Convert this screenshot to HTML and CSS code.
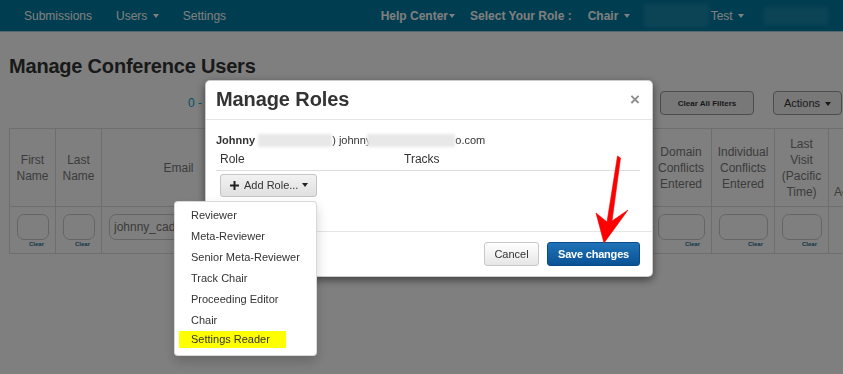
FILE: index.html
```html
<!DOCTYPE html>
<html lang="en">
<head>
<meta charset="utf-8">
<title>Manage Conference Users</title>
<link rel="stylesheet" href="styles.css">
</head>
<body>
<nav class="topnav">
  <ul class="nav-left">
    <li class="nav-item">Submissions</li>
    <li class="nav-item">Users <span class="caret"></span></li>
    <li class="nav-item">Settings</li>
  </ul>
  <ul class="nav-right">
    <li class="nav-item strong help">Help Center<span class="caret tight"></span></li>
    <li class="nav-item strong role-label">Select Your Role :</li>
    <li class="nav-item strong chair">Chair <span class="caret"></span></li>
    <li class="nav-blur blur-a"></li>
    <li class="nav-item test">Test <span class="caret"></span></li>
    <li class="nav-blur blur-b"></li>
  </ul>
</nav>

<main class="page">
  <h1 class="page-title">Manage Conference Users</h1>
  <div class="toolbar">
    <span class="pager">0 -</span>
    <button class="btn btn-filters">Clear All Filters</button>
    <button class="btn btn-actions">Actions <span class="caret"></span></button>
  </div>

  <table class="users">
    <colgroup>
      <col class="c-first"><col class="c-last"><col class="c-email">
      <col class="c-aff"><col class="c-roles"><col class="c-status">
      <col class="c-domain"><col class="c-indiv"><col class="c-visit"><col class="c-more">
    </colgroup>
    <thead>
      <tr>
        <th>First Name</th>
        <th>Last Name</th>
        <th>Email</th>
        <th>Organization</th>
        <th>Roles</th>
        <th>Status</th>
        <th>Domain Conflicts Entered</th>
        <th>Individual Conflicts Entered</th>
        <th>Last Visit (Pacific Time)</th>
        <th class="th-more">Actions</th>
      </tr>
    </thead>
    <tbody>
      <tr class="filters">
        <td><input class="filter-input" type="text"><span class="clear">Clear</span></td>
        <td><input class="filter-input" type="text"><span class="clear">Clear</span></td>
        <td><input class="filter-input" type="text" value="johnny_cadiz"><span class="clear">Clear</span></td>
        <td><input class="filter-input" type="text"><span class="clear">Clear</span></td>
        <td><input class="filter-input" type="text"><span class="clear">Clear</span></td>
        <td><input class="filter-input" type="text"><span class="clear">Clear</span></td>
        <td><input class="filter-input" type="text"><span class="clear">Clear</span></td>
        <td><input class="filter-input" type="text"><span class="clear">Clear</span></td>
        <td><input class="filter-input" type="text"><span class="clear">Clear</span></td>
        <td></td>
      </tr>
    </tbody>
  </table>
</main>

<div class="backdrop"></div>

<div class="modal">
  <div class="modal-header">
    <h2 class="modal-title">Manage Roles</h2>
    <button class="close">&times;</button>
  </div>
  <div class="modal-body">
    <div class="user-line"><b>Johnny</b> <span class="redact r1"></span>) johnny<span class="redact r2"></span>o.com</div>
    <table class="roles">
      <colgroup><col class="c-role"><col></colgroup>
      <thead>
        <tr><th>Role</th><th>Tracks</th></tr>
      </thead>
      <tbody>
        <tr>
          <td colspan="2" class="add-cell">
            <div class="add-wrap">
              <button class="btn btn-add">
                <svg class="plus" width="9" height="9" viewBox="0 0 9 9"><path d="M4.5 0v9M0 4.5h9" stroke="#222" stroke-width="2"/></svg>Add Role...<span class="caret dark"></span>
              </button>
              <ul class="role-menu">
                <li>Reviewer</li>
                <li>Meta-Reviewer</li>
                <li>Senior Meta-Reviewer</li>
                <li>Track Chair</li>
                <li>Proceeding Editor</li>
                <li>Chair</li>
                <li><span class="hl">Settings Reader</span></li>
              </ul>
            </div>
          </td>
        </tr>
      </tbody>
    </table>
  </div>
  <div class="modal-footer">
    <button class="btn btn-cancel">Cancel</button>
    <button class="btn btn-save">Save changes</button>
  </div>
</div>

<svg class="annotation" width="843" height="374" viewBox="0 0 843 374">
  <path d="M617.5 156 L620.5 158 L612 221 L628 210 L604 243 L596 213 L607 222 Z" fill="#f00" stroke="#e00" stroke-width="0.6" stroke-linejoin="round"/>
</svg>
</body>
</html>
```

FILE: styles.css
```css
* { box-sizing: border-box; }

html, body {
  margin: 0;
  height: 100%;
  overflow: hidden;
}

body {
  font-family: "Liberation Sans", Arial, Helvetica, sans-serif;
  background: #fff;
  color: #333;
}

ul { list-style: none; margin: 0; padding: 0; }

/* ---------- top navigation ---------- */
.topnav {
  display: flex;
  align-items: center;
  height: 32px;
  background: #007aa0;
  border-bottom: 1px solid #a6d2da;
  padding: 0 15px 0 12px;
}

.nav-left, .nav-right {
  display: flex;
  align-items: center;
}

.nav-right { margin-left: auto; }

.nav-item {
  color: #fff;
  font-size: 12px;
  line-height: 16px;
  white-space: nowrap;
}

.nav-left .nav-item { padding: 0 12px; }

.strong { font-weight: bold; }
.role-label { margin-left: 15px; }
.chair { margin-left: 16px; }
.blur-a { margin-left: 14px; width: 65px; height: 23px; }
.test { margin-left: 2px; }
.blur-b { margin-left: 20px; width: 64px; height: 18px; }

.nav-blur {
  background: rgba(110, 190, 210, 0.22);
  filter: blur(2px);
  border-radius: 2px;
}

.caret {
  display: inline-block;
  width: 0;
  height: 0;
  border-top: 4px solid;
  border-left: 3.5px solid transparent;
  border-right: 3.5px solid transparent;
  margin-left: 2px;
  vertical-align: middle;
}

.caret.tight { margin-left: 1px; }
.caret.dark { color: #222; margin-left: 4px; }

/* ---------- page ---------- */
.page { padding: 0 1px 0 9px; }

.page-title {
  margin: 22px 0 0;
  font-size: 20px;
  line-height: 24px;
  font-weight: bold;
  letter-spacing: -0.2px;
  color: #333;
}

.toolbar {
  display: flex;
  align-items: center;
  height: 24px;
  margin-top: 13px;
}

.pager {
  flex: 1;
  padding-left: 179px;
  font-size: 12px;
  color: #00a0c8;
}

.btn {
  font-family: inherit;
  cursor: pointer;
  color: #333;
}

.btn-filters {
  width: 94px;
  height: 24px;
  font-size: 8px;
  font-weight: bold;
  background: #f0f0f0;
  border: 1px solid #9a9a9a;
  border-radius: 4px;
  padding: 0;
}

.btn-actions {
  width: 69px;
  height: 24px;
  margin-left: 19px;
  font-size: 11px;
  background: #f0f0f0;
  border: 1px solid #9a9a9a;
  border-radius: 4px;
  padding: 0;
}

/* ---------- users table ---------- */
.users {
  margin-top: 13px;
  table-layout: fixed;
  width: 899px;
  border-collapse: collapse;
  border: 1px solid #dcdcdc;
}

.c-first, .c-last { width: 46px; }
.c-email { width: 154px; }
.c-aff { width: 140px; }
.c-roles { width: 130px; }
.c-status { width: 125px; }
.c-domain { width: 61px; }
.c-indiv { width: 63px; }
.c-visit { width: 54px; }
.c-more { width: 80px; }

.users th {
  height: 78px;
  padding: 0 4px;
  border: 1px solid #dcdcdc;
  font-size: 12px;
  line-height: 16px;
  font-weight: normal;
  color: #787878;
  text-align: center;
  vertical-align: middle;
}

.users th.th-more {
  text-align: left;
  vertical-align: bottom;
  white-space: nowrap;
  padding: 0 0 6px 5px;
}

.users td {
  height: 47px;
  padding: 7px 6px 0 7px;
  border: 1px solid #dcdcdc;
  vertical-align: top;
}

.filter-input {
  display: block;
  width: 100%;
  height: 26px;
  border: 1px solid #cacaca;
  border-radius: 7px;
  background: #fff;
  padding: 0 4px;
  font-family: inherit;
  font-size: 12px;
  color: #777;
}

.clear {
  display: block;
  text-align: right;
  padding-right: 5px;
  margin-top: 1px;
  font-size: 6px;
  line-height: 7px;
  font-weight: bold;
  color: #2a6a90;
}

/* ---------- modal ---------- */
.backdrop {
  position: fixed;
  inset: 0;
  background: rgba(0, 0, 0, 0.5);
  z-index: 10;
}

.modal {
  position: fixed;
  top: 80px;
  left: 205px;
  width: 448px;
  background: #fff;
  border: 1px solid rgba(0, 0, 0, 0.2);
  border-radius: 5px;
  box-shadow: 0 3px 9px rgba(0, 0, 0, 0.5);
  z-index: 20;
}

.modal-header {
  display: flex;
  justify-content: space-between;
  align-items: center;
  padding: 7px 12px 9px 10px;
  border-bottom: 1px solid #e5e5e5;
}

.modal-title {
  margin: 0;
  font-size: 20px;
  line-height: 22px;
  font-weight: bold;
  letter-spacing: -0.1px;
  color: #333;
}

.close {
  background: none;
  border: 0;
  padding: 0;
  font-family: inherit;
  font-size: 17px;
  font-weight: bold;
  line-height: 1;
  color: #8c8c8c;
}

.modal-body {
  padding: 12px 12px 34px 10px;
}

.user-line {
  font-size: 11px;
  line-height: 16px;
  color: #333;
  white-space: nowrap;
}

.redact {
  display: inline-block;
  height: 13px;
  vertical-align: -3px;
  background: #e8e8e8;
  filter: blur(1.5px);
}

.r1 { width: 74px; }
.r2 { width: 88px; margin-left: -4px; }

.roles {
  width: 100%;
  border-collapse: collapse;
}

.c-role { width: 184px; }

.roles th {
  height: 22px;
  padding: 0 4px;
  text-align: left;
  font-size: 12px;
  font-weight: normal;
  color: #333;
  border-bottom: 1px solid #ddd;
}

.add-cell { padding: 3px 4px 0; }

.add-wrap {
  position: relative;
  display: inline-block;
}

.btn-add {
  display: inline-flex;
  align-items: center;
  width: 97px;
  height: 23px;
  padding: 0 0 0 9px;
  font-size: 11px;
  background: linear-gradient(#f2f2f2, #e0e0e0);
  border: 1px solid #c4c4c4;
  border-radius: 3px;
}

.plus { margin-right: 5px; }

.role-menu {
  position: absolute;
  left: -46px;
  top: 27px;
  width: 143px;
  padding: 3px 0;
  background: #fff;
  border: 1px solid rgba(0, 0, 0, 0.15);
  border-radius: 4px;
  box-shadow: 0 6px 12px rgba(0, 0, 0, 0.18);
  z-index: 5;
}

.role-menu li {
  padding: 0 16px;
  font-size: 11px;
  line-height: 21px;
  color: #333;
  white-space: nowrap;
}

.hl {
  display: inline-block;
  vertical-align: top;
  line-height: 17px;
  margin-left: -12px;
  padding: 0 16px 0 12px;
  background: #ffff00;
}

.modal-footer {
  display: flex;
  justify-content: flex-end;
  gap: 8px;
  padding: 10px 12px 10px;
  border-top: 1px solid #e5e5e5;
}

.btn-cancel {
  height: 24px;
  width: 55px;
  padding: 0;
  font-size: 11px;
  background: linear-gradient(#fff, #e6e6e6);
  border: 1px solid #c8c8c8;
  border-radius: 3px;
}

.btn-save {
  height: 24px;
  width: 93px;
  padding: 0;
  font-size: 11px;
  font-weight: bold;
  letter-spacing: -0.2px;
  color: #fff;
  background: linear-gradient(#1f73b7, #0a5295);
  border: 1px solid #0a4a86;
  border-radius: 3px;
}

/* ---------- annotation ---------- */
.annotation {
  position: fixed;
  top: 0;
  left: 0;
  z-index: 30;
  pointer-events: none;
}
```
